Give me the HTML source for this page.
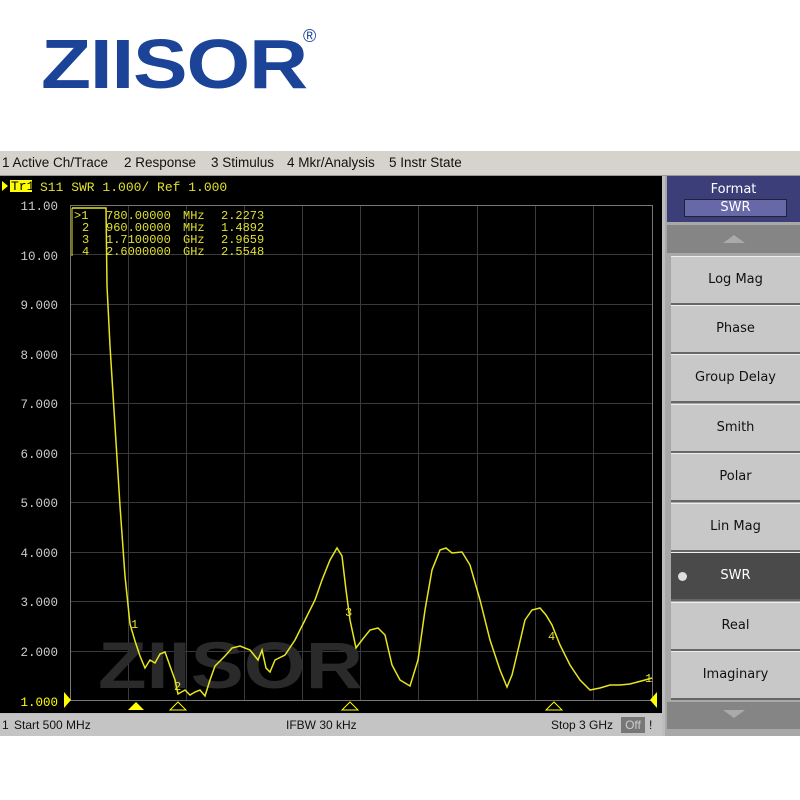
<!DOCTYPE html>
<html><head><meta charset="utf-8"><style>
body{margin:0;width:800px;height:800px;background:#fff;position:relative;overflow:hidden;font-family:"Liberation Sans",sans-serif}
.logo{position:absolute;left:41px;top:24px;font-size:70px;font-weight:bold;color:#1b4398;letter-spacing:-1px;transform:scaleX(1.17);transform-origin:left}
.reg{position:absolute;left:303px;top:26px;font-size:18px;color:#1b4398}
.menu{position:absolute;left:0;top:151px;width:800px;height:24px;background:#d6d3cc;font-size:13.5px;line-height:24px;color:#111;border-bottom:2px solid #999}
.menu span{position:absolute}
.btn{position:absolute;left:671px;width:129px;height:46px;background:#c8c8c8;border-top:1px solid #eee;border-bottom:2px solid #666;text-align:center;line-height:46px;color:#111;font-family:"DejaVu Sans",sans-serif;font-size:13px}
</style></head><body>
<div class="logo">ZIISOR</div><div class="reg">®</div>
<div class="menu"><span style="left:2px">1 Active Ch/Trace</span><span style="left:124px">2 Response</span><span style="left:211px">3 Stimulus</span><span style="left:287px">4 Mkr/Analysis</span><span style="left:389px">5 Instr State</span></div>
<div style="position:absolute;left:0;top:176px;width:665px;height:560px;background:#bdbdbd"></div>
<svg style="position:absolute;left:0;top:176px" width="662" height="537">
<rect width="662" height="537" fill="#000"/>
<g stroke="#3a3a3a" stroke-width="1">
<line x1="70" y1="78.5" x2="652" y2="78.5"/><line x1="70" y1="128.5" x2="652" y2="128.5"/><line x1="70" y1="178.5" x2="652" y2="178.5"/><line x1="70" y1="227.5" x2="652" y2="227.5"/><line x1="70" y1="277.5" x2="652" y2="277.5"/><line x1="70" y1="326.5" x2="652" y2="326.5"/><line x1="70" y1="376.5" x2="652" y2="376.5"/><line x1="70" y1="425.5" x2="652" y2="425.5"/><line x1="70" y1="475.5" x2="652" y2="475.5"/>
<line x1="128.5" y1="29" x2="128.5" y2="525"/><line x1="186.5" y1="29" x2="186.5" y2="525"/><line x1="244.5" y1="29" x2="244.5" y2="525"/><line x1="302.5" y1="29" x2="302.5" y2="525"/><line x1="360.5" y1="29" x2="360.5" y2="525"/><line x1="418.5" y1="29" x2="418.5" y2="525"/><line x1="477.5" y1="29" x2="477.5" y2="525"/><line x1="535.5" y1="29" x2="535.5" y2="525"/><line x1="593.5" y1="29" x2="593.5" y2="525"/>
</g>
<rect x="70.5" y="29.5" width="582" height="495" fill="none" stroke="#777"/>
<text x="98" y="512" font-size="66" font-weight="bold" fill="#2a2a2a" font-family="Liberation Sans" textLength="265" lengthAdjust="spacingAndGlyphs">ZIISOR</text>
<g font-family="Liberation Mono,monospace" font-size="13" fill="#e0e030">
<polygon points="2,5 8,10 2,15" fill="#ff0"/><rect x="10" y="4" width="22" height="12" fill="#ff0"/><text x="11" y="14" fill="#000">Tr1</text>
<text x="40" y="15">S11 SWR 1.000/ Ref 1.000</text>
<g fill="#ccc" text-anchor="end" font-size="12.5"><text x="58" y="34">11.00</text><text x="58" y="84">10.00</text><text x="58" y="133">9.000</text><text x="58" y="183">8.000</text><text x="58" y="232">7.000</text><text x="58" y="282">6.000</text><text x="58" y="331">5.000</text><text x="58" y="381">4.000</text><text x="58" y="430">3.000</text><text x="58" y="480">2.000</text></g>
<text x="58" y="530" text-anchor="end" fill="#ff0" font-size="12.5">1.000</text>
<polygon points="64,516 71,524 64,532" fill="#ff0"/><polygon points="657,516 650,524 657,532" fill="#ff0"/>
<g font-size="12">
<text y="43"><tspan x="74">&gt;1</tspan><tspan x="106">780.00000</tspan><tspan x="183">MHz</tspan><tspan x="221">2.2273</tspan></text>
<text y="55"><tspan x="82">2</tspan><tspan x="106">960.00000</tspan><tspan x="183">MHz</tspan><tspan x="221">1.4892</tspan></text>
<text y="67"><tspan x="82">3</tspan><tspan x="106">1.7100000</tspan><tspan x="183">GHz</tspan><tspan x="221">2.9659</tspan></text>
<text y="79"><tspan x="82">4</tspan><tspan x="106">2.6000000</tspan><tspan x="183">GHz</tspan><tspan x="221">2.5548</tspan></text>
</g>
<polyline fill="none" stroke="#e6e61e" stroke-width="1.5" points="72,32 106,32 107,110 110,170 115,250 120,330 125,400 130,448 135,465 140,480 145,492 150,484 155,487 160,478 165,476 170,490 175,504 178,518 185,514 190,519 195,516 200,514 205,520 210,504 215,490 225,480 232,472 240,470 250,474 258,484 262,474 266,492 270,496 275,484 285,479 295,464 305,444 315,424 322,404 330,384 337,372 342,380 346,414 350,444 356,472 362,464 370,454 378,452 385,459 392,489 400,504 410,510 418,484 425,434 432,394 440,374 446,372 452,377 462,376 470,389 480,424 490,464 500,494 507,511 512,499 518,474 525,444 532,434 540,432 546,439 552,449 560,469 570,489 580,504 590,514 600,512 610,509 620,509 630,508 645,504 652,502"/>
<line x1="72" y1="32" x2="72" y2="80" stroke="#e6e61e"/>
<g font-size="12"><text x="131" y="452">1</text><text x="174" y="514">2</text><text x="345" y="440">3</text><text x="548" y="464">4</text><text x="645" y="506">1</text></g>
<polygon points="128,534 136,526 144,534" fill="#ff0"/>
<g fill="none" stroke="#ff0"><polygon points="170,534 178,526 186,534"/><polygon points="342,534 350,526 358,534"/><polygon points="546,534 554,526 562,534"/></g>
</g>
</svg>
<div style="position:absolute;left:0;top:714px;width:662px;height:22px;background:#c4c4c4;font-size:12px;line-height:22px;color:#111">
<span style="position:absolute;left:2px">1</span><span style="position:absolute;left:14px">Start 500 MHz</span>
<span style="position:absolute;left:286px">IFBW 30 kHz</span><span style="position:absolute;left:551px">Stop 3 GHz</span>
<span style="position:absolute;left:621px;top:3px;width:24px;height:16px;background:#777;color:#ccc;line-height:16px;text-align:center">Off</span><span style="position:absolute;left:649px">!</span></div>
<div style="position:absolute;left:665px;top:176px;width:135px;height:560px;background:#a8a8a8"></div>
<div style="position:absolute;left:667px;top:176px;width:133px;height:46px;background:#3b3e78;color:#fff;font-size:13px;font-family:'DejaVu Sans',sans-serif;text-align:center">
<div style="margin-top:6px">Format</div><div style="margin:2px 0 0 17px;width:101px;height:16px;line-height:16px;background:#6668a8;border:1px solid #223">SWR</div></div>
<div style="position:absolute;left:667px;top:225px;width:133px;height:28px;background:#858585"><div style="margin:10px auto 0;width:0;border:11px solid transparent;border-bottom:8px solid #aaa;border-top:0"></div></div>
<div class="btn" style="top:256px">Log Mag</div>
<div class="btn" style="top:305px">Phase</div>
<div class="btn" style="top:354px">Group Delay</div>
<div class="btn" style="top:404px">Smith</div>
<div class="btn" style="top:453px">Polar</div>
<div class="btn" style="top:503px">Lin Mag</div>
<div class="btn" style="top:552px;background:#4a4a4a;color:#fff">SWR<span style="position:absolute;left:7px;top:19px;width:9px;height:9px;border-radius:50%;background:#ddd"></span></div>
<div class="btn" style="top:602px">Real</div>
<div class="btn" style="top:651px">Imaginary</div>
<div style="position:absolute;left:667px;top:702px;width:133px;height:27px;background:#858585"><div style="margin:8px auto 0;width:0;border:11px solid transparent;border-top:8px solid #aaa;border-bottom:0"></div></div>
</body></html>
